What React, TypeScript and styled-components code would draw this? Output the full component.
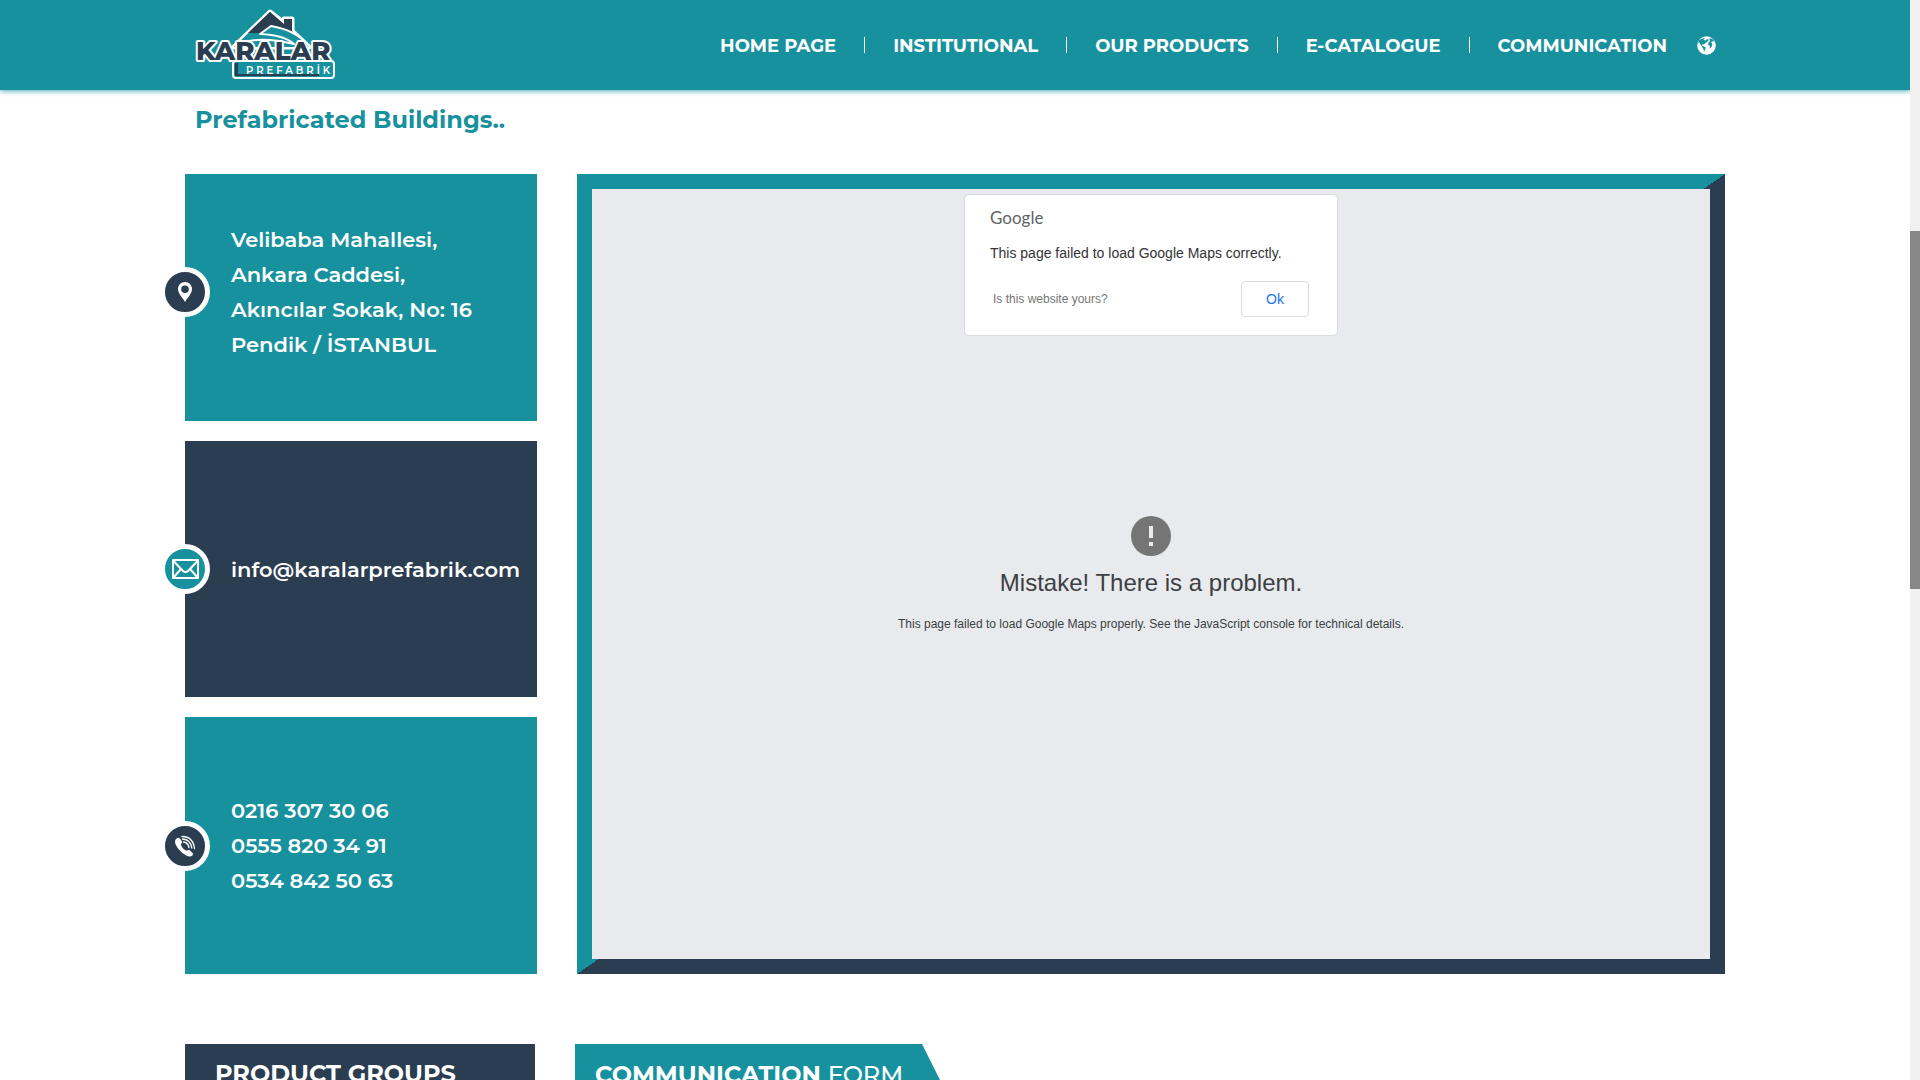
import React from "react";
import styled, { createGlobalStyle } from "styled-components";

const teal = "#18919e";
const navy = "#2b3d50";
const brandFont = `Montserrat, Inter, "Noto Sans", sans-serif`;
const mapFont = `Arial, "Liberation Sans", sans-serif`;

const GlobalStyle = createGlobalStyle`
  *, *::before, *::after { box-sizing: border-box; }
  body { margin: 0; background: #fff; font-family: ${brandFont}; }
  h1, h2, p, ul { margin: 0; padding: 0; }
  ul { list-style: none; }
  a { color: inherit; text-decoration: none; }
`;

const Shell = styled.div`
  display: flex;
  height: 100vh;
  overflow: hidden;
`;

const Page = styled.div`
  flex: 1;
  min-width: 0;
`;

const ScrollTrack = styled.div`
  flex: none;
  width: 10px;
  padding-top: 231px;
  background: #f1f1f1;
`;

const ScrollThumb = styled.div`
  height: 358px;
  background: #888;
`;

const Header = styled.header`
  height: 90px;
  background: ${teal};
  box-shadow: 0 1px 5px rgba(24, 145, 158, 0.8);
`;

const Container = styled.div`
  width: 100%;
  max-width: 1540px;
  margin: 0 auto;
`;

const HeaderRow = styled(Container)`
  display: flex;
  justify-content: space-between;
  align-items: center;
  height: 100%;
  padding: 0 9px 0 10px;
`;

const LogoLink = styled.a`
  display: block;
  height: 72px;
`;

const Nav = styled.nav`
  display: flex;
  align-items: center;
`;

const Menu = styled.ul`
  display: flex;
  align-items: center;
`;

const MenuItem = styled.li`
  padding: 2px 28px 0;
  color: #fff;
  font-size: 18px;
  line-height: 14px;
  font-weight: 700;
  white-space: nowrap;

  & + & { border-left: 1px solid #fff; }
`;

const LanguageButton = styled.button`
  display: flex;
  margin-left: 2px;
  padding: 0;
  border: 0;
  background: none;
  color: #fff;
`;

const Title = styled.h1`
  padding: 14px 10px 0;
  color: ${teal};
  font-size: 24px;
  line-height: 32px;
  font-weight: 700;
`;

const ContactGrid = styled.section`
  display: grid;
  grid-template-columns: 352px 1fr;
  gap: 40px;
  margin-top: 38px;
`;

const Cards = styled.div`
  display: grid;
  grid-template-rows: 247px 256px 257px;
  gap: 20px;
`;

const Card = styled.article<{ $tone: string; $bottom?: number }>`
  display: flex;
  flex-direction: column;
  justify-content: center;
  padding-bottom: ${(p) => p.$bottom ?? 0}px;
  background: ${(p) => p.$tone};
  color: #fff;
`;

const CardContent = styled.div`
  position: relative;
  display: flex;
  flex-direction: column;
  padding-left: 46px;
  font-size: 21px;
  line-height: 35px;
  font-weight: 600;
  white-space: nowrap;
`;

const Badge = styled.span<{ $tone: string }>`
  position: absolute;
  left: -25px;
  top: calc(50% - 25px);
  width: 50px;
  height: 50px;
  border: 5px solid #fff;
  border-radius: 50%;
  background: ${(p) => p.$tone};

  svg { display: block; width: 40px; height: 40px; }
`;

const MapFrame = styled.div`
  padding: 15px;
  background: linear-gradient(to bottom right, ${teal} 50%, ${navy} 50%);
`;

const MapArea = styled.div`
  position: relative;
  display: flex;
  flex-direction: column;
  align-items: center;
  height: 100%;
  padding-top: 327px;
  background: #e8eaed;
  color: #3c4043;
  font-family: ${mapFont};
`;

const Dialog = styled.div`
  position: absolute;
  top: 5px;
  left: calc(50% - 187px);
  width: 374px;
  height: 142px;
  padding: 13px 28px 0 25px;
  border: 1px solid #dadce0;
  border-radius: 5px;
  background: #fff;
`;

const GoogleMark = styled.p`
  color: #5f6368;
  font-family: Lato, sans-serif;
  font-size: 17px;
  line-height: 20px;
`;

const DialogText = styled.p`
  margin-top: 15px;
  color: #333;
  font-size: 14px;
  line-height: 20px;
`;

const DialogFooter = styled.div`
  display: flex;
  align-items: center;
  justify-content: space-between;
  margin-top: 18px;
  padding-left: 3px;
  color: #757575;
  font-size: 12px;
`;

const OkButton = styled.button`
  width: 68px;
  height: 36px;
  border: 1px solid #dadce0;
  border-radius: 4px;
  background: #fff;
  color: #1a73e8;
  font-family: ${mapFont};
  font-size: 14px;
`;

const ErrorTitle = styled.h2`
  margin-top: 12px;
  font-size: 24px;
  line-height: 30px;
  font-weight: 400;
`;

const ErrorText = styled.p`
  margin-top: 18px;
  font-size: 12px;
  line-height: 16px;
`;

const LowerGrid = styled.section`
  display: grid;
  grid-template-columns: 350px 1fr;
  gap: 40px;
  margin-top: 70px;
`;

const PanelHeading = styled.h2`
  height: 60px;
  padding: 0 30px;
  background: ${navy};
  color: #fff;
  font-size: 24px;
  line-height: 60px;
  font-weight: 700;
`;

const FormHeading = styled(PanelHeading)`
  width: 377px;
  padding: 0 20px;
  background: ${teal};
  clip-path: polygon(0 0, 347px 0, 100% 100%, 0 100%);
  line-height: 62px;
  white-space: nowrap;

  span { font-weight: 500; }
`;

const menu = ["HOME PAGE", "INSTITUTIONAL", "OUR PRODUCTS", "E-CATALOGUE", "COMMUNICATION"];

function Logo() {
  return (
    <svg width="142" height="72" viewBox="0 0 142 72" overflow="visible" role="img" aria-label="Karalar Prefabrik">
      <g strokeLinejoin="round">
        <path d="M39 38 L75 3 L89 14 V10 H97 V22 L114 38 Z" fill={teal} stroke="#fff" strokeWidth="5" />
        <path d="M39 38 L75 3 L114 38 Z" fill={teal} />
        <path d="M53 24 L75 3 L89 15 V10 H97 V22 L113 38 L78 16 L66 24 Z" fill={navy} />
        <path d="M40 36 Q62 26 99 35 Q89 26 65 25 L76 17 Q100 21 112 35" fill={teal} stroke="#fff" strokeWidth="2" />
      </g>
      <rect x="38" y="52" width="101" height="17" rx="3" fill={teal} stroke="#fff" strokeWidth="2" />
      <path d="M40 54 V67 H124 V65 H43 V54 Z" fill={navy} />
      <text x="1" y="51" fontFamily={brandFont} fontWeight="800" fontSize="26" fill={navy} stroke="#fff" strokeWidth="4" strokeLinejoin="round" paintOrder="stroke">KARALAR</text>
      <text x="51" y="65" fontFamily={brandFont} fontWeight="600" fontSize="10" letterSpacing="3" fill="#fff">PREFABRİK</text>
    </svg>
  );
}

function GlobeIcon() {
  return (
    <svg width="19" height="19" viewBox="0 0 19 19" aria-hidden="true">
      <circle cx="9.500" cy="9.500" r="9.300" fill="#fff" />
      <path fill={teal} d="M2 4.200 Q5 1.800 8 2.200 L6.500 3.800 L8.500 4.500 L10.500 3 L12 4 L10 6 L8.500 7 L7 8.500 L5.500 8 L5 9.500 L7 10.500 L8.800 11.500 L8 14 L7 15.500 L6.200 12.500 L4.500 10 L3 8 L2.500 6.500 L1 7 Z" />
      <path fill={teal} d="M12.200 2.200 L15.500 3 L17.300 5.500 L15.500 5.200 L14 6.200 L15.500 8 L14.500 11 L13 12.200 L12.500 9.500 L11 8.800 L11.500 6.800 L13 5 Z" />
    </svg>
  );
}

function PinIcon() {
  return (
    <svg viewBox="0 0 40 40" aria-hidden="true">
      <path fill="#fff" fillRule="evenodd" d="M20 10c-4 0-7 3-7 7 0 5 5 9 7 13 2-4 7-8 7-13 0-4-3-7-7-7zm0 3.500a3.800 3.800 0 1 1 0 7.600 3.800 3.800 0 0 1 0-7.600z" />
    </svg>
  );
}

function MailIcon() {
  return (
    <svg viewBox="0 0 40 40" aria-hidden="true" fill="none" stroke="#fff" strokeWidth="2" strokeLinejoin="round">
      <rect x="8" y="11" width="25" height="18" />
      <path d="M8 11.500 L18 22 Q20.500 24 23 22 L33 11.500 M8 29 L16 20 M33 29 L25 20" />
    </svg>
  );
}

function PhoneIcon() {
  return (
    <svg viewBox="0 0 40 40" aria-hidden="true">
      <path fill="#fff" d="M12.500 12 C10 13 9.500 15.500 10.500 18 C13 24 18 28.500 24 30.500 C26.500 31 28 29.500 28 27.500 L24.500 24 C23 23.500 22.500 25 21 24.500 C18.500 23.500 16.500 21 16 19 C15.800 17.500 17.500 17 17 15.500 L15 12.500 C14.300 11.700 13.500 11.600 12.500 12 Z" />
      <g fill="none" stroke="#fff" strokeWidth="1.300" strokeLinecap="round">
        <path d="M17 10.500 Q28 10.500 29.500 22.500" />
        <path d="M17.500 13 Q25.500 13.500 26.800 22" />
        <path d="M18.500 16 Q23 16.500 24 21.500" />
      </g>
    </svg>
  );
}

export default function App() {
  return (
    <Shell>
      <GlobalStyle />
      <Page>
        <Header>
          <HeaderRow>
            <LogoLink href="#home"><Logo /></LogoLink>
            <Nav aria-label="Main">
              <Menu>
                {menu.map((label) => (
                  <MenuItem key={label}><a href="#menu">{label}</a></MenuItem>
                ))}
              </Menu>
              <LanguageButton type="button" aria-label="Language"><GlobeIcon /></LanguageButton>
            </Nav>
          </HeaderRow>
        </Header>
        <Container as="main">
          <Title>Prefabricated Buildings..</Title>
          <ContactGrid>
            <Cards>
              <Card $tone={teal} $bottom={12}>
                <CardContent>
                  <Badge $tone={navy}><PinIcon /></Badge>
                  <p>Velibaba Mahallesi,<br />Ankara Caddesi,<br />Akıncılar Sokak, No: 16<br />Pendik / İSTANBUL</p>
                </CardContent>
              </Card>
              <Card $tone={navy}>
                <CardContent>
                  <Badge $tone={teal}><MailIcon /></Badge>
                  <a href="mailto:info@karalarprefabrik.com">info@karalarprefabrik.com</a>
                </CardContent>
              </Card>
              <Card $tone={teal}>
                <CardContent>
                  <Badge $tone={navy}><PhoneIcon /></Badge>
                  <a href="tel:02163073006">0216 307 30 06</a>
                  <a href="tel:05558203491">0555 820 34 91</a>
                  <a href="tel:05348425063">0534 842 50 63</a>
                </CardContent>
              </Card>
            </Cards>
            <MapFrame>
              <MapArea>
                <svg width="40" height="40" viewBox="0 0 40 40" aria-hidden="true">
                  <circle cx="20" cy="20" r="20" fill="#757575" />
                  <path d="M18 10h4v12h-4zM18 26h4v4h-4z" fill="#e8eaed" />
                </svg>
                <ErrorTitle>Mistake! There is a problem.</ErrorTitle>
                <ErrorText>This page failed to load Google Maps properly. See the JavaScript console for technical details.</ErrorText>
                <Dialog role="dialog" aria-label="Google Maps">
                  <GoogleMark>Google</GoogleMark>
                  <DialogText>This page failed to load Google Maps correctly.</DialogText>
                  <DialogFooter>
                    <a href="#owner">Is this website yours?</a>
                    <OkButton type="button">Ok</OkButton>
                  </DialogFooter>
                </Dialog>
              </MapArea>
            </MapFrame>
          </ContactGrid>
          <LowerGrid>
            <PanelHeading>PRODUCT GROUPS</PanelHeading>
            <FormHeading>COMMUNICATION <span>FORM</span></FormHeading>
          </LowerGrid>
        </Container>
      </Page>
      <ScrollTrack aria-hidden="true"><ScrollThumb /></ScrollTrack>
    </Shell>
  );
}
